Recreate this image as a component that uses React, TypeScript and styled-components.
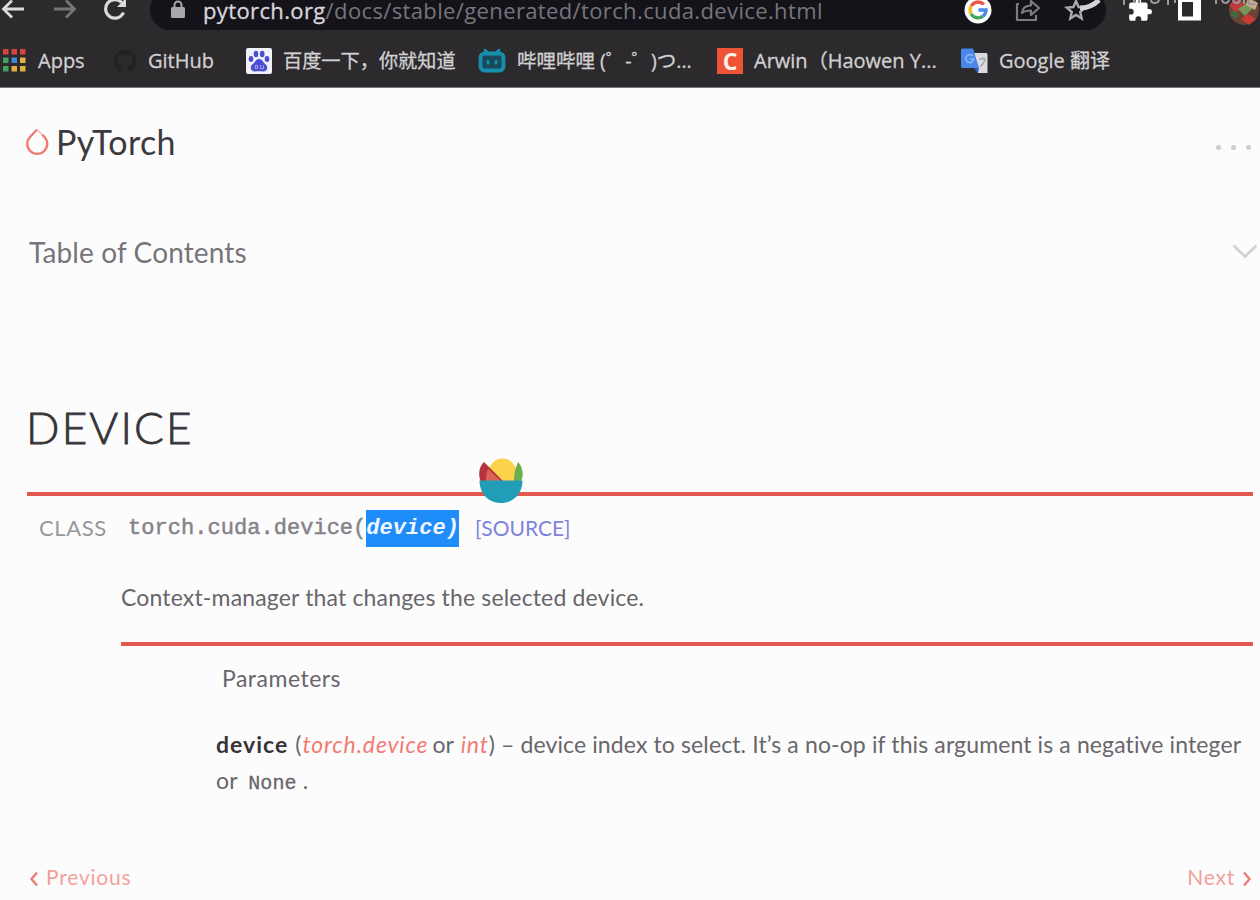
import styled, { createGlobalStyle } from "styled-components";

export default function App() {
  return (
    <>
      <GlobalStyle />
      <Browser>
        <Toolbar>
          <NavButtons>
            <svg width="26" height="26" viewBox="0 0 26 26" fill="none" stroke="#dcdadc" strokeWidth="2.8">
              <path d="M24 12H4M12 3.500 3.500 12l8.500 8.500" />
            </svg>
            <svg width="26" height="26" viewBox="0 0 26 26" fill="none" stroke="#777578" strokeWidth="2.8">
              <path d="M3 12h20M15 3.500l8.500 8.500-8.500 8.500" />
            </svg>
            <svg width="26" height="26" viewBox="0 0 26 26" fill="none" stroke="#dcdadc" strokeWidth="3.2">
              <path d="M21.500 15.500a9.300 9.300 0 1 1-1.800-10" />
              <path d="M24 1v9h-9z" fill="#dcdadc" stroke="none" />
            </svg>
          </NavButtons>
          <AddressBar>
            <LockIcon />
            <Url>
              <b>pytorch.org</b>/docs/stable/generated/torch.cuda.device.html
            </Url>
            <AddressActions>
              <GoogleIcon />
              <ShareIcon />
              <StarIcon />
            </AddressActions>
          </AddressBar>
          <Extensions>
            <PuzzleIcon />
            <PanelIcon />
            <Avatar />
          </Extensions>
        </Toolbar>
        <Overlay width="140" height="8" viewBox="0 0 140 8" fill="none" stroke="#9b999b" strokeWidth="2">
          <path d="M4 0v5M14 0v3M19 0v3M31 0c0 4 7 4 8 0M48 0v5M55 0v3M96 0v4M102 0c1 4 6 4 7 0M113 0c1 4 6 4 7 0M124 0v4M129 0v4h6" />
        </Overlay>
        <Bookmarks>
          <Bookmark>
            <AppsIcon />
            <BookmarkText>Apps</BookmarkText>
          </Bookmark>
          <Bookmark>
            <GithubIcon />
            <BookmarkText>GitHub</BookmarkText>
          </Bookmark>
          <Bookmark>
            <BaiduIcon />
            <BookmarkText $size={19.2}>百度一下，你就知道</BookmarkText>
          </Bookmark>
          <Bookmark>
            <BiliIcon />
            <BookmarkText $size={19.5}>哔哩哔哩 (゜-゜)つ...</BookmarkText>
          </Bookmark>
          <Bookmark>
            <Tile>C</Tile>
            <BookmarkText>Arwin（Haowen Y...</BookmarkText>
          </Bookmark>
          <Bookmark>
            <TranslateIcon />
            <BookmarkText>Google 翻译</BookmarkText>
          </Bookmark>
        </Bookmarks>
      </Browser>
      <Page>
        <Header>
          <Logo>
            <svg width="24" height="28" viewBox="0 0 24 28" fill="none" stroke="#f0796d" strokeWidth="2.4">
              <path d="M11 1.500 4 9a10 10 0 1 0 14.500 0L16 6.500" />
              <path d="M11 1.500l4.500 4.500" strokeWidth="1.6" stroke="#f5b4ae" />
            </svg>
            <span>PyTorch</span>
          </Logo>
          <Dots>
            <i />
            <i />
            <i />
          </Dots>
        </Header>
        <Contents>
          <span>Table of Contents</span>
          <svg width="26" height="16" viewBox="0 0 26 16" fill="none" stroke="#d3d1d4" strokeWidth="2.8">
            <path d="M1.500 1.500 13 12.500l11.500-11" />
          </svg>
        </Contents>
        <Title>DEVICE</Title>
        <Rule>
          <FruitBowl />
        </Rule>
        <Signature>
          <Kind>CLASS</Kind>
          <code>
            torch.cuda.device(<Selected>device)</Selected>
          </code>
          <Source>[SOURCE]</Source>
        </Signature>
        <Description>
          <Summary>Context-manager that changes the selected device.</Summary>
          <Rule />
          <Parameters>
            <dt>Parameters</dt>
            <dd>
              <div>
                <strong>device</strong> (<em>torch.device</em> or <em>int</em>) – device index to select. It’s a no-op if this argument is a negative integer
              </div>
              <div>
                or <code>None</code> .
              </div>
            </dd>
          </Parameters>
        </Description>
        <Pager>
          <PagerLink>
            <svg width="10" height="16" viewBox="0 0 10 16" fill="none" stroke="#ee7d76" strokeWidth="2.4">
              <path d="M8 1.500 2.500 8 8 14.500" />
            </svg>
            <span>Previous</span>
          </PagerLink>
          <PagerLink>
            <span>Next</span>
            <svg width="10" height="16" viewBox="0 0 10 16" fill="none" stroke="#ee7d76" strokeWidth="2.4">
              <path d="M2 1.500 7.500 8 2 14.500" />
            </svg>
          </PagerLink>
        </Pager>
      </Page>
    </>
  );
}

function LockIcon() {
  return (
    <svg width="16" height="20" viewBox="0 0 16 20">
      <rect x="1" y="7" width="14" height="11" rx="1.500" fill="#a9a7ae" />
      <path d="M4.500 8V5a3.500 3.500 0 0 1 7 0v3" fill="none" stroke="#a9a7ae" strokeWidth="2" />
    </svg>
  );
}

function GoogleIcon() {
  return (
    <svg width="28" height="28" viewBox="0 0 28 28" fill="none" strokeWidth="3.4">
      <circle cx="14" cy="14" r="13.500" fill="#fff" />
      <path d="M7.200 10a8 8 0 0 1 12.600-1.600" stroke="#ea5548" />
      <path d="M7.200 18a8 8 0 0 1 0-8" stroke="#f5bd2c" />
      <path d="M19 20.200A8 8 0 0 1 7.200 18" stroke="#40a95a" />
      <path d="M14.500 14H22a8 8 0 0 1-3 6.200" stroke="#4a86ee" />
    </svg>
  );
}

function ShareIcon() {
  return (
    <svg width="26" height="26" viewBox="0 0 26 26" fill="none" stroke="#7d7b81" strokeWidth="2.2">
      <path d="M4 7H2v16h19v-5" strokeLinejoin="round" />
      <path d="M7 16c.5-5 3.500-7.500 9-7.500V4l8 7-8 7v-4.500c-4 0-6.500.5-9 2.500z" strokeLinejoin="round" />
    </svg>
  );
}

function StarIcon() {
  return (
    <svg width="38" height="28" viewBox="0 0 38 28" fill="none">
      <path
        d="m12 5 2.600 6 6.600.6-5 4.400 1.500 6.400L12 19l-5.700 3.400L7.800 16l-5-4.400 6.600-.6z"
        stroke="#aaa8ad"
        strokeWidth="2.4"
      />
      <path d="M16 12c9 0 14-3 19-8" stroke="#d4d2d5" strokeWidth="5" />
    </svg>
  );
}

function PuzzleIcon() {
  return (
    <svg width="26" height="26" viewBox="0 0 24 24" fill="#fff">
      <path d="M20.500 11H19V7a2 2 0 0 0-2-2h-4V3.500a2.500 2.500 0 0 0-5 0V5H4a2 2 0 0 0-2 2v3.800h1.500a2.700 2.700 0 0 1 0 5.400H2V20a2 2 0 0 0 2 2h3.800v-1.500a2.700 2.700 0 0 1 5.400 0V22H17a2 2 0 0 0 2-2v-4h1.500a2.500 2.500 0 0 0 0-5z" />
    </svg>
  );
}

function PanelIcon() {
  return (
    <svg width="26" height="26" viewBox="0 0 26 26">
      <path d="M3 3h19v18.500H3z" fill="none" stroke="#fff" strokeWidth="4" />
      <path d="M16 3h8v20h-8z" fill="#fff" />
    </svg>
  );
}

function Avatar() {
  return (
    <svg width="34" height="34" viewBox="0 0 34 34">
      <circle cx="17" cy="17" r="15" fill="#6b4436" />
      <path d="M2 12l9-7 6 8-8 7z" fill="#c0383a" />
      <path d="M11 16l9-6 6 5-8 8z" fill="#79965a" />
      <path d="M14 26l7-5 8 5-7 6z" fill="#cc3b34" />
      <path d="M21 5l10 5-3 7-9-5z" fill="#c9ab88" />
      <path d="M5 17l7 3-3 6-5-3z" fill="#3f6a40" />
    </svg>
  );
}

function AppsIcon() {
  const colors = ["#d8453e", "#d8453e", "#d8453e", "#42a35c", "#3f86d8", "#e0b040", "#42a35c", "#e0b040", "#e0b040"];
  return (
    <svg width="25" height="26" viewBox="0 0 25 26">
      {colors.map((color, index) => (
        <rect key={index} x={1 + (index % 3) * 8.5} y={1 + Math.floor(index / 3) * 8.5} width="5.500" height="5.500" fill={color} />
      ))}
    </svg>
  );
}

function GithubIcon() {
  return (
    <svg width="24" height="24" viewBox="0 0 24 24" fill="#232124">
      <path d="M12 .5a11.500 11.500 0 0 0-3.600 22.400c.6.100.8-.2.800-.6v-2.200c-3.200.7-3.900-1.400-3.900-1.400-.5-1.300-1.300-1.700-1.300-1.700-1-.7.100-.7.100-.7 1.200.1 1.800 1.200 1.800 1.200 1 1.800 2.700 1.300 3.400 1 .1-.8.400-1.300.7-1.600-2.600-.3-5.200-1.300-5.200-5.700 0-1.300.4-2.300 1.200-3.100-.1-.3-.5-1.500.1-3.100 0 0 1-.3 3.200 1.200a11 11 0 0 1 5.800 0c2.200-1.500 3.200-1.200 3.200-1.200.6 1.600.2 2.800.1 3.100.7.800 1.200 1.800 1.200 3.100 0 4.400-2.700 5.400-5.200 5.700.4.400.8 1.100.8 2.100v3.200c0 .3.200.7.800.6A11.500 11.500 0 0 0 12 .5z" />
    </svg>
  );
}

function BaiduIcon() {
  return (
    <svg width="26" height="26" viewBox="0 0 26 26" fill="#4b4ed0">
      <rect width="26" height="26" rx="2" fill="#f1f1fb" />
      <ellipse cx="5" cy="11" rx="2.300" ry="3" />
      <ellipse cx="10" cy="6" rx="2.300" ry="3.200" />
      <ellipse cx="16.200" cy="6" rx="2.300" ry="3.200" />
      <ellipse cx="21" cy="11" rx="2.300" ry="3" />
      <path d="M13 11c3 0 4 3.200 6.500 5.300 3.500 3 1.500 7.500-2.500 7.200-3-.3-5-.3-8 0-4 .3-6-4.200-2.500-7.200C9 14.200 10 11 13 11z" />
      <path d="M9.500 20.500v-3h2v3zM14.500 17v3.500h3V17" fill="none" stroke="#9a9cec" strokeWidth="1.1" />
    </svg>
  );
}

function BiliIcon() {
  return (
    <svg width="28" height="26" viewBox="0 0 28 26" fill="none" stroke="#168fae" strokeWidth="3.8" strokeLinecap="round">
      <rect x="2.500" y="5.500" width="23" height="17" rx="4" fill="#1a4a5a" />
      <path d="M7 2l3 3M21 2l-3 3" strokeWidth="2.8" />
      <path d="M10 13.500v1.500M18 13.500v1.500" strokeWidth="3.2" />
    </svg>
  );
}

function TranslateIcon() {
  return (
    <svg width="27" height="26" viewBox="0 0 27 26">
      <path d="M10 5h15a1.500 1.500 0 0 1 1.500 1.500V25H17z" fill="#dcdbe0" />
      <path d="M18 11h7M21.500 9v2M24 11c-.8 4-2.500 6-5 7.500" stroke="#a3a7b2" strokeWidth="1.4" fill="none" />
      <path d="M1.500.5H12l6 19.500H1.500A1.500 1.500 0 0 1 0 18.500V2A1.500 1.500 0 0 1 1.500.5z" fill="#4786ea" />
      <path d="M12 8.200a4 4 0 1 0 .8 2.800H9" stroke="#8fb6f5" strokeWidth="1.6" fill="none" />
      <path d="M13 20h5l-1 5.500z" fill="#2f5fc4" />
    </svg>
  );
}

function FruitBowl() {
  return (
    <Floating width="46" height="48" viewBox="0 0 46 48">
      <ellipse cx="24.500" cy="16" rx="14" ry="14.500" fill="#fcd24c" />
      <path d="M40 5c-2 5-4 10-4 19h7c3-6 2-14-3-19z" fill="#6bb04a" />
      <path d="M6 5C1 10 0 17 2.500 24H25z" fill="#b5333d" />
      <path d="M10 12c-2 4-2 8-2 12h15z" fill="#de6357" />
      <path d="M1.500 23.500h43C44.500 36 36 46 23 46S1.500 36 1.500 23.500z" fill="#229db8" />
    </Floating>
  );
}

const GlobalStyle = createGlobalStyle`
  * {
    box-sizing: border-box;
  }

  body {
    margin: 0;
    background-color: #fdfcfd;
    overflow: hidden;
  }

  svg {
    flex: none;
    display: block;
  }
`;

const Browser = styled.header`
  position: relative;
  height: 88px;
  overflow: hidden;
  background-color: #2c2a2c;
  border-bottom: 1px solid #77757a;
  font-family: "Open Sans", "Noto Sans CJK SC", sans-serif;
`;

const Toolbar = styled.div`
  display: flex;
  align-items: center;
  height: 40px;
  margin-top: -10px;
`;

const Overlay = styled.svg`
  position: absolute;
  top: 0;
  left: 1120px;
`;

const NavButtons = styled.div`
  display: flex;
  flex: none;
  gap: 25px;
  width: 150px;
`;

const AddressBar = styled.div`
  display: flex;
  flex: none;
  align-items: center;
  width: 956px;
  height: 40px;
  padding-left: 20px;
  border-radius: 20px;
  background-color: #141319;
`;

const Url = styled.div`
  flex: 1;
  margin-left: 17px;
  font-size: 22px;
  line-height: 20px;
  letter-spacing: 0.37px;
  white-space: nowrap;
  color: #77757c;

  b {
    font-weight: 400;
    color: #d8d6dc;
    -webkit-text-stroke: 0.3px #d8d6dc;
  }
`;

const AddressActions = styled.div`
  display: flex;
  align-items: center;
  gap: 23px;
  padding-right: 4px;
`;

const Extensions = styled.div`
  display: flex;
  flex: none;
  align-items: center;
  gap: 24px;
  margin-left: 21px;
`;

const Bookmarks = styled.nav`
  display: grid;
  grid-template-columns: 111px 133px 232px 239px 244px 1fr;
  align-items: center;
  height: 61px;
  padding-left: 2px;
`;

const Bookmark = styled.div`
  display: flex;
  align-items: center;
  gap: 11px;
`;

const BookmarkText = styled.span<{ $size?: number }>`
  font-size: ${(props) => props.$size ?? 20}px;
  line-height: 28px;
  white-space: nowrap;
  color: #d2d0d3;
  -webkit-text-stroke: 0.3px #d2d0d3;
`;

const Tile = styled.span`
  width: 26px;
  height: 26px;
  background-color: #ee5338;
  color: #fff0e4;
  font: 700 23px/26px "Open Sans", sans-serif;
  text-align: center;
`;

const Page = styled.main`
  padding: 0 7px 0 27px;
  font-family: Lato, sans-serif;
  color: #68666a;
`;

const Header = styled.div`
  display: flex;
  align-items: center;
  justify-content: space-between;
  height: 108px;
`;

const Logo = styled.div`
  display: flex;
  align-items: center;
  gap: 6px;
  margin-left: -1px;
  font-size: 34px;
  line-height: 40px;
  letter-spacing: 0.4px;
  color: #3c3a3e;
`;

const Dots = styled.div`
  display: flex;
  gap: 10px;
  padding: 10px 2px 0 0;

  i {
    width: 5px;
    height: 5px;
    border-radius: 2px;
    background-color: #d0ced1;
  }
`;

const Contents = styled.div`
  display: flex;
  align-items: center;
  justify-content: space-between;
  height: 112px;
  margin: 0 -5px 0 2px;
  font-size: 28px;
  letter-spacing: 0.12px;
  color: #77757a;
`;

const Title = styled.h1`
  height: 184px;
  margin: 0;
  padding-top: 89px;
  font-size: 44px;
  font-weight: 300;
  line-height: 60px;
  letter-spacing: 2.2px;
  text-indent: -1px;
  color: #363438;
  -webkit-text-stroke: 0.8px #363438;
`;

const Rule = styled.div`
  position: relative;
  height: 4px;
  background-color: #e4594f;
`;

const Floating = styled.svg`
  position: absolute;
  top: -35px;
  left: 451px;
`;

const Signature = styled.div`
  display: flex;
  align-items: center;
  height: 66px;
  padding-left: 12px;
  font-size: 22px;
  line-height: 36px;

  code {
    margin-left: 22px;
    font: 22px/38px "Liberation Mono", monospace;
    letter-spacing: 0.04px;
    color: #858388;
    -webkit-text-stroke: 0.5px;
  }
`;

const Kind = styled.span`
  width: 67px;
  padding-bottom: 3px;
  letter-spacing: 0.6px;
  color: #98969a;
`;

const Selected = styled.em`
  display: inline-block;
  height: 37px;
  background-color: #1e8dfa;
  color: #eef6ff;
  font-weight: 700;
  -webkit-text-stroke: 0;
`;

const Source = styled.a`
  margin-left: 16px;
  padding-bottom: 3px;
  font-size: 21px;
  color: #7c83dc;
`;

const Description = styled.section`
  margin-left: 94px;
`;

const Summary = styled.p`
  height: 80px;
  margin: 0;
  padding-top: 17px;
  font-size: 23px;
  line-height: 36px;
  letter-spacing: 0.16px;
  white-space: nowrap;
`;

const Parameters = styled.dl`
  margin: 0 0 0 95px;
  padding-top: 14px;
  font-size: 23px;
  line-height: 36px;
  letter-spacing: 0.12px;
  white-space: nowrap;

  dt {
    padding-left: 6px;
    letter-spacing: 0.5px;
  }

  dd {
    margin: 30px 0 0;
  }

  strong {
    margin-right: 1px;
    letter-spacing: 1px;
    color: #363438;
  }

  em {
    margin: 0 -2px 0 1px;
    letter-spacing: 0.85px;
    color: #f27b74;
  }

  em + em {
    margin-right: 0;
  }

  code {
    margin-left: 5px;
    font: 20px "Liberation Mono", monospace;
    -webkit-text-stroke: 0.3px;
  }
`;

const Pager = styled.footer`
  display: flex;
  justify-content: space-between;
  padding: 61px 1px 0 2px;
  font-size: 21px;
  line-height: 36px;
`;

const PagerLink = styled.a`
  display: flex;
  align-items: center;
  gap: 7px;
  letter-spacing: 0.8px;
  color: #f2a09b;

  svg {
    margin-top: 4px;
  }
`;
